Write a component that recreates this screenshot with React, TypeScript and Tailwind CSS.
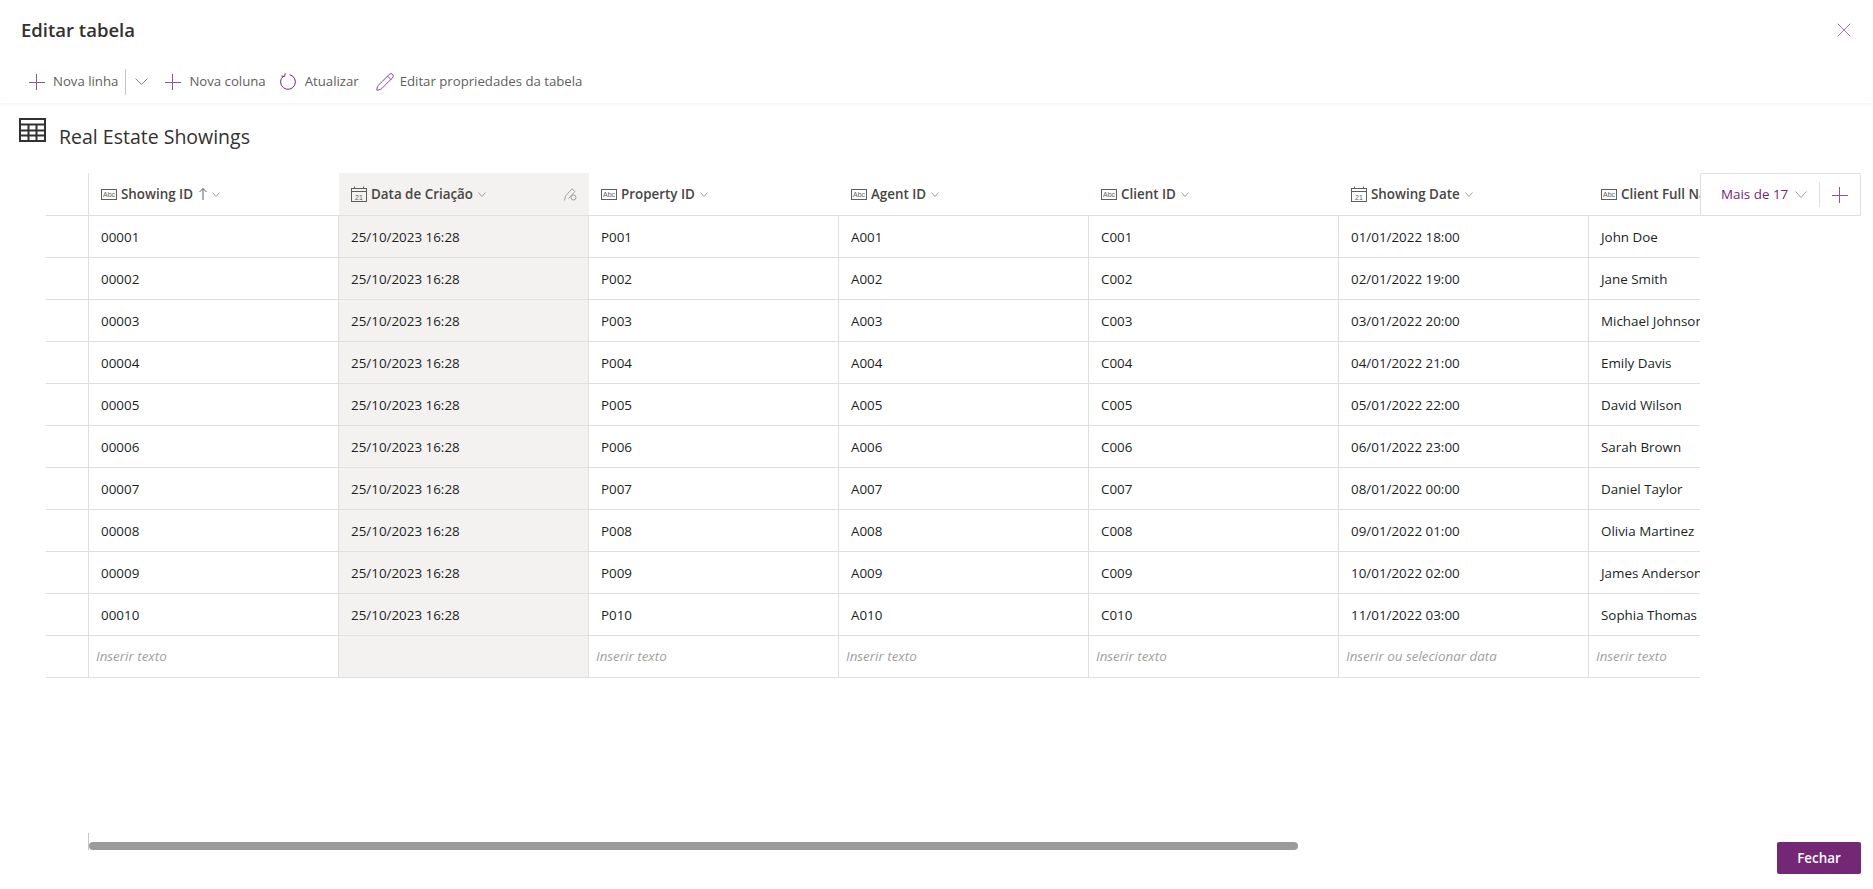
import { Pencil, X } from "lucide-react";

const rows = [
  ["00001", "P001", "A001", "C001", "01/01/2022 18:00", "John Doe"],
  ["00002", "P002", "A002", "C002", "02/01/2022 19:00", "Jane Smith"],
  ["00003", "P003", "A003", "C003", "03/01/2022 20:00", "Michael Johnson"],
  ["00004", "P004", "A004", "C004", "04/01/2022 21:00", "Emily Davis"],
  ["00005", "P005", "A005", "C005", "05/01/2022 22:00", "David Wilson"],
  ["00006", "P006", "A006", "C006", "06/01/2022 23:00", "Sarah Brown"],
  ["00007", "P007", "A007", "C007", "08/01/2022 00:00", "Daniel Taylor"],
  ["00008", "P008", "A008", "C008", "09/01/2022 01:00", "Olivia Martinez"],
  ["00009", "P009", "A009", "C009", "10/01/2022 02:00", "James Anderson"],
  ["00010", "P010", "A010", "C010", "11/01/2022 03:00", "Sophia Thomas"],
];

function PlusIcon() {
  return (
    <svg width="16" height="16" viewBox="0 0 16 16" className="shrink-0">
      <path d="M7.5 0V16M0 8.5H16" fill="none" stroke="#8a5a8a" />
    </svg>
  );
}

function Chevron({ w, h, color }: { w: number; h: number; color: string }) {
  return (
    <svg width={w} height={h} viewBox={`0 0 ${w} ${h}`} className="shrink-0">
      <path d={`M0.5 0.5L${w / 2} ${h - 0.5}L${w - 0.5} 0.5`} fill="none" stroke={color} />
    </svg>
  );
}

function AbcIcon() {
  return (
    <svg width="16" height="11" viewBox="0 0 16 11" className="shrink-0">
      <rect x="0.5" y="0.5" width="15" height="10" fill="none" stroke="#605e5c" />
      <text x="8" y="8" textAnchor="middle" fontSize="7" fill="#605e5c" fontFamily="Liberation Sans, sans-serif">
        Abc
      </text>
    </svg>
  );
}

function CalendarIcon() {
  return (
    <svg width="16" height="16" viewBox="0 0 16 16" className="shrink-0">
      <rect x="0.5" y="2.5" width="15" height="13" fill="none" stroke="#605e5c" />
      <path d="M0.5 5.5H15.5M3.5 0.5V2.5M12.5 0.5V2.5" fill="none" stroke="#605e5c" />
      <text x="8" y="13.5" textAnchor="middle" fontSize="7" fill="#605e5c" fontFamily="Liberation Sans, sans-serif">
        21
      </text>
    </svg>
  );
}

function RefreshIcon() {
  return (
    <svg width="16" height="17" viewBox="0 0 16 17" className="shrink-0">
      <path d="M9.6 1.7a7.4 7.4 0 1 1-6.2 1.4" fill="none" stroke="#742774" />
      <path d="M5.2 0.3L4.6 3.4L1.4 3" fill="none" stroke="#742774" />
    </svg>
  );
}

function TableIcon() {
  return (
    <svg width="27" height="24" viewBox="0 0 27 24" className="shrink-0">
      <rect x="1" y="1" width="25" height="22" fill="none" stroke="#323130" strokeWidth="2" />
      <path d="M1 6.5H26M1 12.5H26M1 17.5H26M9.5 6V23M17.5 6V23" stroke="#323130" strokeWidth="2" />
    </svg>
  );
}

function HeaderCell({ label, date, sorted, locked }: { label: string; date?: boolean; sorted?: boolean; locked?: boolean }) {
  return (
    <div className={`w-[250px] shrink-0 h-[43px] flex items-center pl-[12px] pr-[12px] border-b border-[#e1dfdd] ${locked ? "bg-[#f3f2f1]" : ""}`}>
      {date ? <CalendarIcon /> : <AbcIcon />}
      <span className="ml-[4px] text-[13.4px] font-semibold text-[#484644] whitespace-nowrap">{label}</span>
      {sorted && (
        <svg width="8" height="12" viewBox="0 0 8 12" className="ml-[6px] shrink-0">
          <path d="M4 0.5V12M0.5 4L4 0.5L7.5 4" fill="none" stroke="#605e5c" />
        </svg>
      )}
      <div className="ml-[5px]">
        <Chevron w={8} h={5} color="#a19f9d" />
      </div>
      {locked && (
        <svg width="13" height="13" viewBox="0 0 13 13" className="ml-auto shrink-0">
          <path d="M0.5 12.5L1.5 8L8 0.8L11 3.5L4.5 10.5" fill="none" stroke="#a19f9d" />
          <circle cx="9.5" cy="9.5" r="2.5" fill="none" stroke="#a19f9d" />
        </svg>
      )}
    </div>
  );
}

function Cell({ value, placeholder, locked, italic }: { value?: string; placeholder?: boolean; locked?: boolean; italic?: boolean }) {
  return (
    <div
      className={`w-[250px] shrink-0 h-[42px] flex items-center border-l border-b border-[#e1dfdd] whitespace-nowrap ${
        placeholder ? "pl-[7px]" : "pl-[12px] pt-[1px]"
      } ${locked ? "bg-[#f3f2f1]" : ""} ${italic ? "italic text-[#a19f9d]" : "text-[#201f1e]"}`}
    >
      {value}
    </div>
  );
}

export default function App() {
  return (
    <div className="h-screen w-full flex flex-col bg-white overflow-hidden text-[13.4px] font-['Open_Sans',sans-serif]">
      <div className="h-[60px] shrink-0 flex items-center justify-between pl-[21px] pr-[17px]">
        <h1 className="text-[18.5px] font-semibold text-[#323130]">Editar tabela</h1>
        <X size={24} strokeWidth={0.8} className="text-[#9b4f96]" />
      </div>

      <div className="h-[43px] shrink-0 flex items-center pl-[29px] shadow-[0_1px_3px_rgba(0,0,0,0.06)] text-[13.2px] text-[#605e5c]">
        <PlusIcon />
        <span className="ml-[8px]">Nova linha</span>
        <div className="ml-[7px] w-px h-[26px] bg-[#c8c6c4]" />
        <div className="ml-[9px]">
          <Chevron w={13} h={7} color="#8a8886" />
        </div>
        <div className="ml-[17px]">
          <PlusIcon />
        </div>
        <span className="ml-[8px]">Nova coluna</span>
        <div className="ml-[14px]">
          <RefreshIcon />
        </div>
        <span className="ml-[9px]">Atualizar</span>
        <Pencil size={20} strokeWidth={1} className="ml-[16px] text-[#742774] shrink-0" />
        <span className="ml-[5px]">Editar propriedades da tabela</span>
      </div>

      <div className="flex items-start pl-[19px] pt-[15px] h-[70px] shrink-0">
        <TableIcon />
        <h2 className="ml-[13px] mt-[5px] text-[19.5px] text-[#323130] leading-[28px]">Real Estate Showings</h2>
      </div>

      <div className="relative flex-1 min-h-0 flex flex-col">
        <div className="ml-[46px] w-[1654px] overflow-hidden">
          <div className="flex">
            <div className="w-[42px] shrink-0 h-[43px] border-b border-[#e1dfdd]" />
            <div className="flex border-l border-[#e1dfdd]">
              <HeaderCell label="Showing ID" sorted />
              <HeaderCell label="Data de Criação" date locked />
              <HeaderCell label="Property ID" />
              <HeaderCell label="Agent ID" />
              <HeaderCell label="Client ID" />
              <HeaderCell label="Showing Date" date />
              <HeaderCell label="Client Full Name" />
            </div>
          </div>
          {rows.map((r) => (
            <div key={r[0]} className="flex">
              <div className="w-[42px] shrink-0 h-[42px] border-b border-[#e1dfdd]" />
              <Cell value={r[0]} />
              <Cell value="25/10/2023 16:28" locked />
              <Cell value={r[1]} />
              <Cell value={r[2]} />
              <Cell value={r[3]} />
              <Cell value={r[4]} />
              <Cell value={r[5]} />
            </div>
          ))}
          <div className="flex">
            <div className="w-[42px] shrink-0 h-[42px] border-b border-[#e1dfdd]" />
            <Cell value="Inserir texto" placeholder italic />
            <Cell locked />
            <Cell value="Inserir texto" placeholder italic />
            <Cell value="Inserir texto" placeholder italic />
            <Cell value="Inserir texto" placeholder italic />
            <Cell value="Inserir ou selecionar data" placeholder italic />
            <Cell value="Inserir texto" placeholder italic />
          </div>
        </div>

        <div className="absolute top-0 left-[1700px] w-[161px] h-[43px] bg-white border border-[#e1dfdd] rounded-t-[2px] flex items-center pl-[20px]">
          <span className="text-[#742774]">Mais de 17</span>
          <div className="ml-[7px]">
            <Chevron w={12} h={7} color="#a19f9d" />
          </div>
          <div className="ml-[12px] w-px h-[25px] bg-[#e1dfdd]" />
          <div className="ml-[12px]">
            <PlusIcon />
          </div>
        </div>

        <div className="mt-auto mb-[15px] flex items-end justify-between pl-[88px] pr-[12px]">
          <div className="flex items-end mb-[24px] h-[17px] border-l border-[#c8c6c4]">
            <div className="w-[1209px] h-[8px] rounded-[4px] bg-[#9b9b9b]" />
          </div>
          <button className="w-[84px] h-[32px] rounded-[2px] bg-[#742774] text-white font-semibold">Fechar</button>
        </div>
      </div>
    </div>
  );
}
